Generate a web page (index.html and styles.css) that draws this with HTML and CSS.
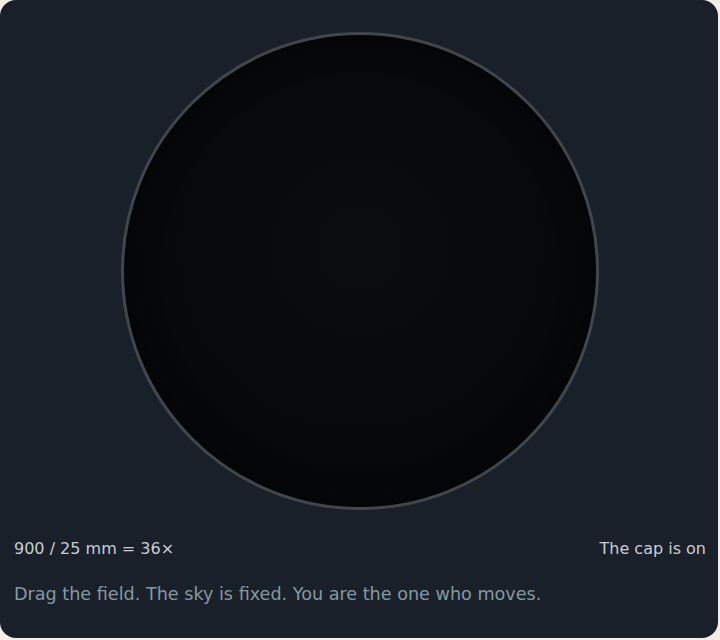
FILE: index.html
```html
<!DOCTYPE html>
<html>
<head>
<meta charset="utf-8">
<link rel="stylesheet" href="styles.css">
</head>
<body>
<div class="card">
  <div class="stage">
    <div class="field"></div>
  </div>
  <div class="readout">
    <span class="formula">900 / 25 mm = 36×</span>
    <span class="status">The cap is on</span>
  </div>
  <p class="hint">Drag the field. The sky is fixed. You are the one who moves.</p>
</div>
</body>
</html>
```
FILE: styles.css
```css
html, body {
  margin: 0;
  padding: 0;
  background: #f3efe6;
}
body {
  font-family: "DejaVu Sans", sans-serif;
}
.card {
  width: 718px;
  height: 638px;
  box-sizing: border-box;
  background: #19202a;
  border-radius: 16px;
  padding: 32px 12px 0 14px;
  display: flex;
  flex-direction: column;
}
.stage {
  display: flex;
  justify-content: center;
  padding-right: 1px;
}
.field {
  width: 478px;
  height: 478px;
  box-sizing: border-box;
  border-radius: 50%;
  border: 3px solid #41454c;
  background: radial-gradient(circle at 50% 45%, #0a0c10 0%, #07080b 60%, #040507 100%);
  box-shadow: inset 0 0 30px rgba(0,0,0,0.6);
}
.readout {
  display: flex;
  justify-content: space-between;
  margin-top: 29px;
  font-size: 16px;
  line-height: 20px;
  color: #c9cdd3;
}
.hint {
  margin: 24px 0 0 0;
  font-size: 17.6px;
  line-height: 22px;
  color: #8699a2;
}
```
